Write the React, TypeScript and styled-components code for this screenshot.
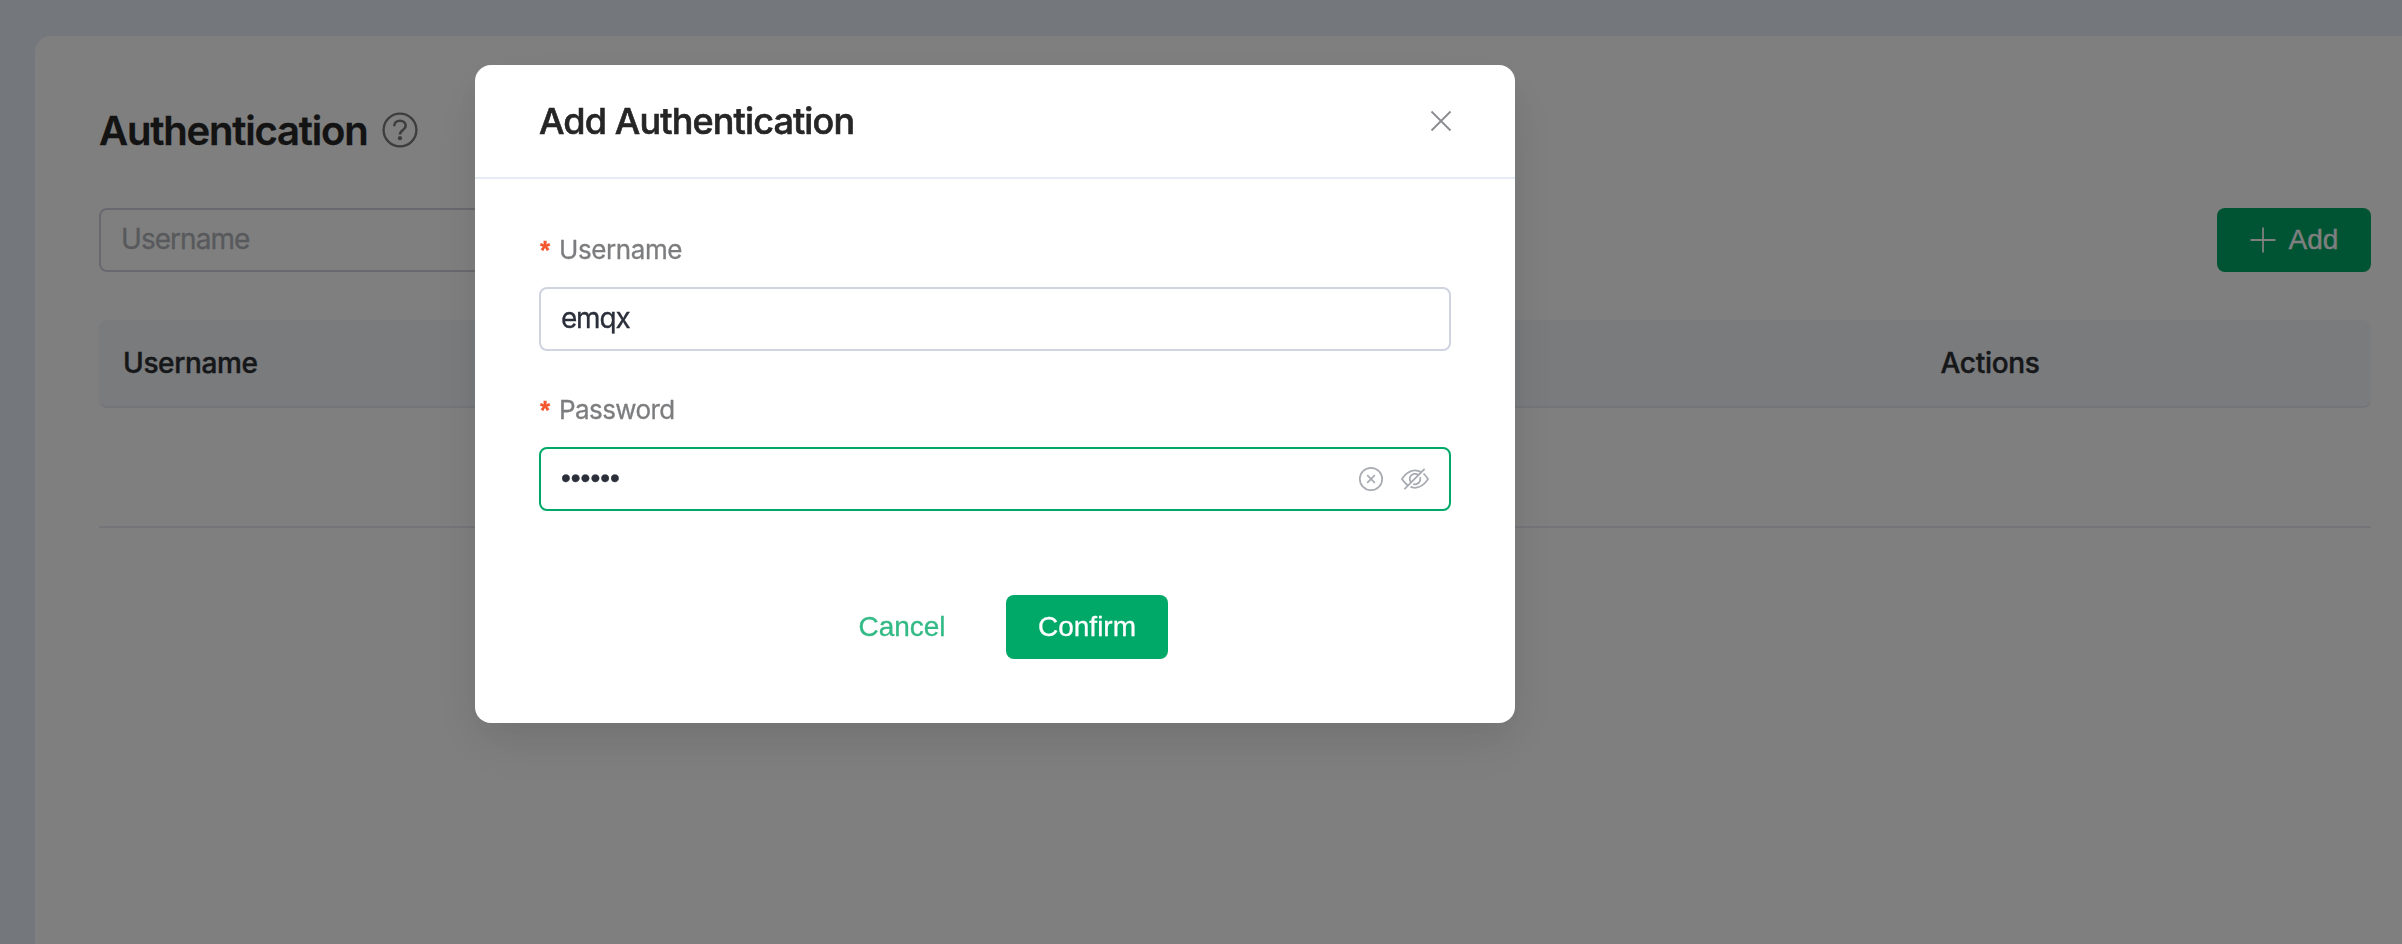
import React from "react";
import styled, { createGlobalStyle } from "styled-components";

const GlobalStyle = createGlobalStyle`
  *, *::before, *::after { box-sizing: border-box; }
  body {
    margin: 0;
    background: #e9eff8;
    font-family: Inter, "Liberation Sans", sans-serif;
    -webkit-font-smoothing: antialiased;
    overflow: hidden;
  }
`;

const Page = styled.div`
  width: 2402px;
  height: 944px;
  padding: 36px 0 0 35px;
  overflow: hidden;
  background: #e9eff8;
`;

const Card = styled.main`
  height: 908px;
  padding: 66px 31px 0 64px;
  background: #ffffff;
  border-radius: 16px 0 0 0;
`;

const TitleRow = styled.div`
  display: flex;
  align-items: center;
  gap: 14px;
  height: 56px;
`;

const PageTitle = styled.h1`
  margin: 0;
  padding-top: 2px;
  font-size: 40px;
  font-weight: 600;
  line-height: 56px;
  letter-spacing: -1.18px;
  color: #262626;
  -webkit-text-stroke: 0.3px currentColor;
`;

const Toolbar = styled.div`
  display: flex;
  justify-content: space-between;
  margin-top: 50px;
`;

const Field = styled.div<{ $focused?: boolean; $width?: number }>`
  display: flex;
  align-items: center;
  width: ${(p) => (p.$width ? `${p.$width}px` : "100%")};
  height: 64px;
  padding: 0 20px;
  border: 2px solid ${(p) => (p.$focused ? "#00a968" : "#d0d3e0")};
  border-radius: 8px;
  background: #ffffff;
`;

const FieldInput = styled.input<{ $spacing: number }>`
  flex: 1;
  min-width: 0;
  height: 100%;
  padding: 0 0 2px;
  border: 0;
  outline: 0;
  background: transparent;
  font-family: inherit;
  font-size: 28px;
  letter-spacing: ${(p) => p.$spacing}px;
  color: #2b2f3a;
  -webkit-text-stroke: 0.3px currentColor;
  &::placeholder {
    color: #b0b3b8;
    opacity: 1;
  }
  &[type="password"] {
    font-family: "Liberation Sans", Arial, sans-serif;
  }
`;

const FieldIcons = styled.div`
  display: flex;
  align-items: center;
  gap: 17px;
`;

const Button = styled.button<{ $text?: boolean; $width: number }>`
  display: flex;
  align-items: center;
  justify-content: center;
  gap: 13px;
  width: ${(p) => p.$width}px;
  height: 64px;
  padding: 0;
  border: 0;
  border-radius: 8px;
  background: ${(p) => (p.$text ? "transparent" : "#00a968")};
  color: ${(p) => (p.$text ? "#33ba86" : "#ffffff")};
  font-family: "Liberation Sans", Arial, sans-serif;
  font-size: 28px;
  line-height: 64px;
  -webkit-text-stroke: 0.3px currentColor;
`;

const TableHead = styled.div`
  display: grid;
  grid-template-columns: 1817.5px 1fr;
  height: 88px;
  margin-top: 48px;
  border-bottom: 2px solid #e8e9f2;
  border-radius: 8px;
  background: #f5f7fb;
`;

const HeadCell = styled.div<{ $spacing: number }>`
  padding-left: 24px;
  font-size: 28px;
  font-weight: 500;
  line-height: 86px;
  letter-spacing: ${(p) => p.$spacing}px;
  color: #2c2e33;
  -webkit-text-stroke: 0.4px currentColor;
`;

const EmptyRow = styled.div`
  height: 120px;
  border-bottom: 2px solid #e8e9f2;
`;

const Overlay = styled.div`
  position: fixed;
  inset: 0;
  padding: 65px 0 0 475px;
  background: rgba(0, 0, 0, 0.5);
`;

const Dialog = styled.section`
  width: 1040px;
  height: 658px;
  border-radius: 16px;
  background: #ffffff;
  box-shadow: 0 24px 64px 8px rgba(0, 0, 0, 0.04), 0 16px 40px rgba(0, 0, 0, 0.08);
`;

const DialogHeader = styled.header`
  display: flex;
  align-items: center;
  justify-content: space-between;
  height: 114px;
  padding: 0 62px 0 64px;
  border-bottom: 2px solid #e6ecf5;
`;

const DialogTitle = styled.h2`
  margin: 0;
  font-size: 36px;
  font-weight: 500;
  line-height: 48px;
  letter-spacing: -0.87px;
  color: #262626;
  -webkit-text-stroke: 0.6px currentColor;
`;

const DialogBody = styled.form`
  padding: 44px 64px 0;
`;

const FormItem = styled.div`
  height: 160px;
`;

const Label = styled.label<{ $spacing: number }>`
  display: flex;
  gap: 6px;
  height: 64px;
  font-size: 26px;
  line-height: 54px;
  letter-spacing: ${(p) => p.$spacing}px;
  color: #7c7d7f;
  -webkit-text-stroke: 0.3px currentColor;
`;

const Required = styled.span`
  width: 14px;
  padding-left: 1px;
  font-family: "Liberation Sans", Arial, sans-serif;
  font-size: 26px;
  font-weight: 700;
  letter-spacing: 0;
  color: #f5562f;
`;

const DialogFooter = styled.footer`
  display: flex;
  justify-content: center;
  gap: 24px;
  margin-top: 52px;
`;

const HelpIcon = () => (
  <svg width="36" height="36" viewBox="0 0 36 36" fill="none" stroke="#7a7a7a" strokeWidth="2.3">
    <circle cx="18" cy="18" r="16.4" />
    <path d="M12.2 14.2c0-3.2 2.4-5.4 5.8-5.4s5.7 2.1 5.7 5c0 4.4-5.7 4-5.7 8.8" strokeWidth="2.6" />
    <circle cx="18" cy="26.2" r="2.1" fill="#7a7a7a" stroke="none" />
  </svg>
);

const PlusIcon = () => (
  <svg width="26" height="26" viewBox="0 0 26 26" fill="none" stroke="currentColor" strokeWidth="1.8">
    <path d="M13 .5v25M.5 13h25" />
  </svg>
);

const CloseIcon = () => (
  <svg width="24" height="24" viewBox="0 0 24 24" fill="none" stroke="#8a8c91" strokeWidth="1.8">
    <path d="M2.5 2.5l19 19M21.5 2.5l-19 19" />
  </svg>
);

const ClearIcon = () => (
  <svg width="26" height="26" viewBox="0 0 26 26" fill="none" stroke="#a8abb2" strokeWidth="1.7">
    <circle cx="13" cy="13" r="11.2" />
    <path d="M9.2 9.2l7.6 7.6M16.8 9.2l-7.6 7.6" />
  </svg>
);

const HideIcon = () => (
  <svg width="28" height="28" viewBox="0 0 1024 1024" fill="#a8abb2">
    <path d="M876.8 156.8c0-9.6-3.2-16-9.6-22.4-6.4-6.4-12.8-9.6-22.4-9.6-9.6 0-16 3.2-22.4 9.6L736 220.800c-64-32-137.600-51.200-224-60.800-160 16-288 73.600-377.600 176C44.800 438.400 0 496 0 512s48 73.600 134.400 176c22.400 25.600 44.800 48 73.600 67.200l-86.400 89.600c-6.400 6.400-9.600 12.800-9.600 22.400 0 9.600 3.200 16 9.600 22.400 6.400 6.400 12.800 9.600 22.400 9.600 9.600 0 16-3.200 22.400-9.600l704-710.400c3.200-6.400 6.400-12.800 6.400-22.400Zm-646.400 528c-76.800-70.400-128-128-153.600-172.800 28.800-48 80-105.600 153.600-172.800C304 272 400 230.400 512 224c64 3.200 124.800 19.200 176 44.800l-54.400 54.400C598.400 300.800 560 288 512 288c-64 0-115.200 22.400-160 64s-64 96-64 160c0 48 12.800 89.600 35.200 124.800L256 707.200c-9.600-6.400-19.200-16-25.600-22.400Zm140.800-96c-12.800-22.400-19.200-48-19.200-76.800 0-44.800 16-83.200 48-112 32-28.800 67.200-48 112-48 28.800 0 54.400 6.400 73.600 19.200L371.200 588.800ZM889.600 336c-12.800-16-28.800-28.800-41.600-41.600l-48 48c73.600 67.200 124.800 124.800 150.400 169.600-28.800 48-80 105.600-153.600 172.800-73.600 67.200-172.800 108.800-284.800 115.200-51.200-3.200-99.200-12.800-140.800-28.800l-48 48c57.600 22.400 118.400 38.400 188.800 44.800 160-16 288-73.600 377.600-176C979.200 585.600 1024 528 1024 512s-48.001-73.600-134.401-176Z" />
    <path d="M511.998 672c-12.800 0-25.600-3.200-38.400-6.400l-51.200 51.200c28.800 12.800 57.600 19.200 89.600 19.200 64 0 115.200-22.400 160-64 41.600-41.600 64-96 64-160 0-32-6.400-64-19.200-89.600l-51.200 51.200c3.200 12.800 6.400 25.600 6.400 38.400 0 44.800-16 83.200-48 112-32 28.800-67.200 48-112 48Z" />
  </svg>
);

export default function App() {
  return (
    <>
      <GlobalStyle />
      <Page>
        <Card>
          <TitleRow>
            <PageTitle>Authentication</PageTitle>
            <HelpIcon />
          </TitleRow>
          <Toolbar>
            <Field $width={480}>
              <FieldInput $spacing={-0.95} placeholder="Username" />
            </Field>
            <Button $width={154}>
              <PlusIcon />
              Add
            </Button>
          </Toolbar>
          <TableHead>
            <HeadCell $spacing={-0.35}>Username</HeadCell>
            <HeadCell $spacing={-0.3}>Actions</HeadCell>
          </TableHead>
          <EmptyRow />
        </Card>
      </Page>
      <Overlay>
        <Dialog>
          <DialogHeader>
            <DialogTitle>Add Authentication</DialogTitle>
            <CloseIcon />
          </DialogHeader>
          <DialogBody>
            <FormItem>
              <Label $spacing={-0.4}>
                <Required>*</Required>Username
              </Label>
              <Field>
                <FieldInput $spacing={-1.2} defaultValue="emqx" />
              </Field>
            </FormItem>
            <FormItem>
              <Label $spacing={-0.6}>
                <Required>*</Required>Password
              </Label>
              <Field $focused>
                <FieldInput $spacing={0} type="password" defaultValue="public" />
                <FieldIcons>
                  <ClearIcon />
                  <HideIcon />
                </FieldIcons>
              </Field>
            </FormItem>
          </DialogBody>
          <DialogFooter>
            <Button type="button" $text $width={160}>Cancel</Button>
            <Button type="button" $width={162}>Confirm</Button>
          </DialogFooter>
        </Dialog>
      </Overlay>
    </>
  );
}
